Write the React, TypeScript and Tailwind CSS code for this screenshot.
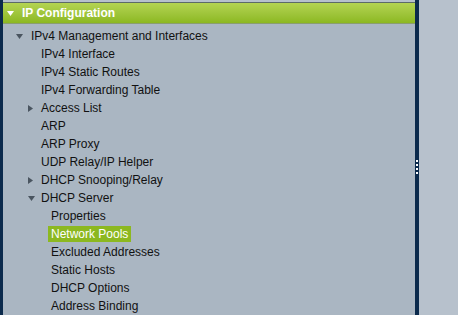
import React from "react";

const Tri = ({ open, color = "#4a5560" }: { open: boolean; color?: string }) =>
  open ? (
    <svg width="7" height="5" viewBox="0 0 7 5" className="shrink-0">
      <polygon points="0,0 7,0 3.5,5" fill={color} />
    </svg>
  ) : (
    <svg width="5" height="7" viewBox="0 0 5 7" className="shrink-0">
      <polygon points="0,0 5,3.5 0,7" fill={color} />
    </svg>
  );

type Item = { label: string; level: number; tri?: "open" | "closed"; active?: boolean };

const items: Item[] = [
  { label: "IPv4 Management and Interfaces", level: 1, tri: "open" },
  { label: "IPv4 Interface", level: 2 },
  { label: "IPv4 Static Routes", level: 2 },
  { label: "IPv4 Forwarding Table", level: 2 },
  { label: "Access List", level: 2, tri: "closed" },
  { label: "ARP", level: 2 },
  { label: "ARP Proxy", level: 2 },
  { label: "UDP Relay/IP Helper", level: 2 },
  { label: "DHCP Snooping/Relay", level: 2, tri: "closed" },
  { label: "DHCP Server", level: 2, tri: "open" },
  { label: "Properties", level: 3 },
  { label: "Network Pools", level: 3, active: true },
  { label: "Excluded Addresses", level: 3 },
  { label: "Static Hosts", level: 3 },
  { label: "DHCP Options", level: 3 },
  { label: "Address Binding", level: 3 },
];

const textLeft: Record<number, string> = { 1: "pl-[28px]", 2: "pl-[38px]", 3: "pl-[45px]" };
const triLeft: Record<number, string> = { 1: "left-[13px]", 2: "left-[25px]", 3: "left-[35px]" };

export default function App() {
  return (
    <div
      className="w-[458px] h-[315px] overflow-hidden flex bg-[#b7c1cc]"
      style={{ fontFamily: '"Liberation Sans", Arial, sans-serif' }}
    >
      <div className="w-[3px] bg-[#0b2a4c] shrink-0" />
      <div className="w-[412px] shrink-0 bg-[#aab6c2] flex flex-col">
        <div className="h-[2px] bg-[#b7c1cc]" />
        <div className="h-[1px] bg-[#5c6b68]" />
        <div className="h-[21px] bg-gradient-to-b from-[#b4d452] to-[#8cb820] flex items-center border-b border-[#8a9e6e]">
          <div className="pl-[4px] pr-[8px] flex items-center">
            <Tri open color="#ffffff" />
          </div>
          <span className="text-white font-bold text-[12px]">IP Configuration</span>
        </div>
        <div className="pt-[3px] flex flex-col">
          {items.map((it) => (
            <div key={it.label} className={`relative h-[18px] flex items-center ${textLeft[it.level]}`}>
              {it.tri && (
                <div className={`absolute ${triLeft[it.level]} top-0 h-[18px] flex items-center`}>
                  <Tri open={it.tri === "open"} />
                </div>
              )}
              <span
                className={`text-[12px] leading-[16px] text-[#111] ${
                  it.active ? "bg-[#8cb820] text-white px-[3px]" : it.level === 3 ? "px-[3px]" : ""
                }`}
              >
                {it.label}
              </span>
            </div>
          ))}
        </div>
      </div>
      <div className="w-[4px] bg-[#0b2a4c] shrink-0 flex flex-col items-center pt-[160px] gap-[2px]">
        {[0, 1, 2, 3].map((i) => (
          <div key={i} className="w-[2px] h-[2px] bg-white" />
        ))}
      </div>
      <div className="flex-1 bg-[#b7c1cc]" />
    </div>
  );
}
